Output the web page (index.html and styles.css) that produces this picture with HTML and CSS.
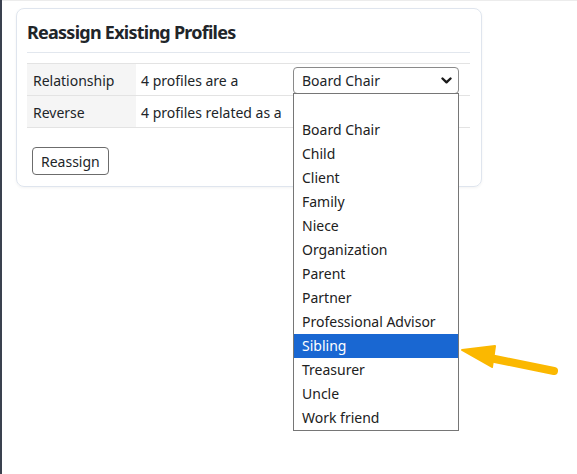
FILE: index.html
```html
<!DOCTYPE html>
<html>
<head>
<meta charset="utf-8">
<link rel="stylesheet" href="styles.css">
</head>
<body>
<div class="page">
  <div class="card">
    <h2 class="title">Reassign Existing Profiles</h2>
    <div class="rule"></div>
    <table class="grid">
      <tr>
        <th>Relationship</th>
        <td>
          <div class="cell">
            <span>4 profiles are a</span>
            <div class="select">
              <span>Board Chair</span>
              <svg class="chev" width="11" height="7" viewBox="0 0 11 7"><path d="M1.5 1.5 L5.5 5.3 L9.5 1.5" fill="none" stroke="#1a1a1a" stroke-width="2.4" stroke-linecap="round" stroke-linejoin="round"/></svg>
              <ul class="menu">
                <li class="blank">&nbsp;</li>
                <li>Board Chair</li>
                <li>Child</li>
                <li>Client</li>
                <li>Family</li>
                <li>Niece</li>
                <li>Organization</li>
                <li>Parent</li>
                <li>Partner</li>
                <li>Professional Advisor</li>
                <li class="active">Sibling</li>
                <li>Treasurer</li>
                <li>Uncle</li>
                <li>Work friend</li>
              </ul>
            </div>
          </div>
        </td>
      </tr>
      <tr>
        <th>Reverse</th>
        <td><div class="cell"><span>4 profiles related as a</span></div></td>
      </tr>
    </table>
    <button class="btn">Reassign</button>
  </div>
  <svg class="arrow" width="110" height="50" viewBox="0 0 110 50">
    <line x1="33" y1="23" x2="97" y2="36" stroke="#fbb800" stroke-width="8" stroke-linecap="round"/>
    <polygon points="5,15 38,11 35,32" fill="#fbb800" stroke="#fbb800" stroke-width="2" stroke-linejoin="round"/>
  </svg>
</div>
</body>
</html>
```

FILE: styles.css
```css
html, body {
  margin: 0;
  padding: 0;
  background: #fff;
}
body {
  font-family: "Noto Sans", "Open Sans", sans-serif;
  font-size: 14px;
  color: #212529;
  box-shadow: inset 0 1px 0 #ececec;
}
.page {
  position: relative;
  min-height: 474px;
  box-sizing: border-box;
  border-left: 2px solid #3a414f;
  padding: 8px 0 0 14px;
}
.card {
  width: 466px;
  box-sizing: border-box;
  border: 1px solid #dfe5ee;
  border-radius: 8px;
  padding: 10px 10px 11px 10px;
  box-shadow: 0 1px 3px rgba(0, 0, 0, 0.05);
}
.title {
  margin: 0;
  font-size: 18px;
  font-weight: 700;
  letter-spacing: -0.75px;
  line-height: 26px;
  color: #212529;
}
.rule {
  height: 1px;
  background: #e2e7ee;
  margin: 7px 1px 10px 0;
}
.grid {
  width: 443px;
  border-collapse: collapse;
}
.grid th, .grid td {
  border-top: 1px solid #e3e3e3;
  border-bottom: 1px solid #e3e3e3;
  height: 30px;
  padding: 0;
  font-weight: 400;
  text-align: left;
  vertical-align: middle;
}
.grid th {
  width: 103px;
  background: #f5f5f5;
  padding: 1px 0 0 6px;
}
.grid td {
  padding: 1px 11px 0 5px;
}
.cell {
  display: flex;
  align-items: center;
  justify-content: space-between;
}
.select {
  position: relative;
  width: 166px;
  height: 27px;
  box-sizing: border-box;
  border: 1px solid #8a8a8a;
  border-radius: 4px;
  display: flex;
  align-items: center;
  justify-content: space-between;
  padding: 0 6px 0 8px;
}
.chev {
  display: block;
}
.menu {
  position: absolute;
  top: 100%;
  left: -1px;
  width: 166px;
  box-sizing: border-box;
  margin: 0;
  padding: 0;
  list-style: none;
  background: #fff;
  border: 1px solid #767676;
  z-index: 5;
}
.menu li {
  height: 24px;
  line-height: 24px;
  padding-left: 8px;
  color: #212121;
  white-space: nowrap;
}
.menu li.active {
  background: #1967d2;
  color: #fff;
}
.btn {
  margin: 19px 0 0 5px;
  height: 28px;
  padding: 0 8px;
  font-family: inherit;
  font-size: 14px;
  color: #212529;
  background: #fff;
  border: 1px solid #6c6c6c;
  border-radius: 4px;
  display: block;
}
.arrow {
  position: absolute;
  left: 455px;
  top: 335px;
}
```
